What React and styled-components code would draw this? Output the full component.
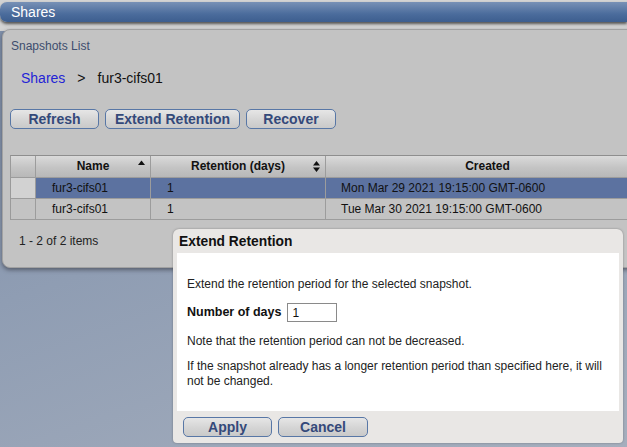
import React from "react";
import styled, { createGlobalStyle } from "styled-components";

const Global = createGlobalStyle`
  html, body { margin: 0; padding: 0; overflow: hidden; }
  body { font-family: "Liberation Sans", Arial, sans-serif; }
`;

const Page = styled.div`
  position: relative;
  width: 627px;
  height: 447px;
  overflow: hidden;
  background: linear-gradient(160deg, #7d8ea9 0%, #8f9db3 45%, #a5aebd 100%);
  padding-top: 2px;
  box-sizing: border-box;
  &::before {
    content: "";
    position: absolute;
    left: 0; right: 0; top: 0; height: 31px;
    background: #d3d3d3;
    z-index: 0;
  }
`;

const TitleBar = styled.div`
  position: relative;
  z-index: 2;
  height: 20px;
  line-height: 20px;
  padding-left: 11px;
  color: #fff;
  font-size: 14px;
  border-radius: 7px 0 0 7px;
  background: linear-gradient(#7891b6, #4b6c9c 60%, #3d5e8f);
  box-shadow: 0 2px 3px rgba(40, 40, 40, 0.75);
`;

const Panel = styled.div`
  position: relative;
  z-index: 1;
  margin: 7px 0 0 2px;
  width: 680px;
  height: 237px;
  background: #c3c3c3;
  border: 1px solid #a2a2a2;
  border-radius: 8px 0 0 8px;
  box-shadow: 0 2px 4px rgba(40, 40, 50, 0.55);
  padding-left: 7px;
  box-sizing: content-box;
  display: flex;
  flex-direction: column;
  align-items: flex-start;
`;

const PanelTitle = styled.div`
  margin: 9px 0 0 1px;
  font-size: 12px;
  line-height: 14px;
  color: #3d4d6e;
`;

const Crumbs = styled.div`
  margin: 17px 0 0 11px;
  font-size: 14px;
  line-height: 16px;
  color: #111;
  display: flex;
`;

const CrumbLink = styled.span`
  color: #2323d6;
`;

const Sep = styled.span`
  margin: 0 12px;
`;

const Toolbar = styled.div`
  margin-top: 23px;
  display: flex;
  gap: 6px;
`;

const Button = styled.button`
  width: ${(p) => p.$w}px;
  height: 20px;
  padding: 0;
  border: 1px solid #5877a6;
  border-radius: 5px;
  background: linear-gradient(#e6e6e6, #d6d6d6 50%, #c9c9c9);
  color: #34497a;
  font-family: "Liberation Sans", Arial, sans-serif;
  font-weight: bold;
  font-size: 14px;
  line-height: 18px;
  box-sizing: border-box;
  cursor: pointer;
`;

const Table = styled.div`
  margin-top: 26px;
  display: grid;
  grid-template-columns: 25px 115px 175px 324px;
  border-top: 1px solid #8e8e8e;
  border-left: 1px solid #9a9a9a;
  font-size: 12px;
  color: #111;
`;

const HeadCell = styled.div`
  position: relative;
  height: 22px;
  line-height: 21px;
  text-align: center;
  font-weight: bold;
  background: linear-gradient(#dadada, #c4c4c4 55%, #b8b8b8);
  border-right: 1px solid #9c9c9c;
  border-bottom: 1px solid #9c9c9c;
  box-sizing: border-box;
`;

const Cell = styled.div`
  height: 21px;
  line-height: 20px;
  padding-left: ${(p) => p.$pad || 16}px;
  background: ${(p) => (p.$sel ? "#5c72a0" : "#c3c3c3")};
  border-right: 1px solid #9c9c9c;
  border-bottom: 1px solid #9c9c9c;
  box-sizing: border-box;
  white-space: nowrap;
`;

const Gutter = styled(Cell)`
  background: ${(p) => (p.$sel ? "#d2d2d2" : "#c3c3c3")};
`;

const SortIcon = styled.svg`
  position: absolute;
  right: 5px;
  top: ${(p) => p.$top}px;
`;

const Pager = styled.div`
  margin: 14px 0 0 9px;
  font-size: 12px;
  line-height: 14px;
  color: #222;
`;

const Dialog = styled.div`
  position: absolute;
  z-index: 5;
  left: 173px;
  top: 229px;
  width: 450px;
  height: 214px;
  background: #e9e7e5;
  border-radius: 6px 6px 4px 4px;
  box-shadow: 0 0 2px rgba(60, 60, 60, 0.5);
  display: flex;
  flex-direction: column;
`;

const DialogTitle = styled.div`
  height: 24px;
  line-height: 25px;
  padding-left: 6px;
  font-size: 13.8px;
  font-weight: bold;
  color: #111;
`;

const DialogBody = styled.div`
  margin: 0 4px;
  height: 158px;
  background: #fff;
  padding: 24px 0 0 10px;
  box-sizing: border-box;
  font-size: 12px;
  line-height: 15px;
  color: #222;
`;

const Para = styled.p`
  margin: 0 0 ${(p) => p.$mb ?? 10}px 0;
  padding-right: 10px;
`;

const FieldRow = styled.div`
  display: flex;
  align-items: center;
  margin: 11px 0 12px 0;
  gap: 6px;
`;

const Label = styled.span`
  font-weight: bold;
  font-size: 12.5px;
  color: #111;
`;

const Input = styled.input`
  width: 50px;
  height: 19px;
  box-sizing: border-box;
  border: 1px solid #8a8a8a;
  padding: 0 4px;
  font-family: "Liberation Sans", Arial, sans-serif;
  font-size: 12px;
  color: #111;
  outline: none;
`;

const DialogFooter = styled.div`
  display: flex;
  gap: 6px;
  padding: 6px 0 0 10px;
`;

const UpArrow = () => (
  <SortIcon $top={4} width="7" height="5" viewBox="0 0 7 5">
    <path d="M0 5 L3.5 0.5 L7 5 Z" fill="#111" />
  </SortIcon>
);

const BothArrow = () => (
  <SortIcon $top={5} width="7" height="11" viewBox="0 0 7 11">
    <path d="M0 4.5 L3.5 0 L7 4.5 Z M0 6.5 L3.5 11 L7 6.5 Z" fill="#111" />
  </SortIcon>
);

const rows = [
  { name: "fur3-cifs01", ret: "1", created: "Mon Mar 29 2021 19:15:00 GMT-0600", sel: true },
  { name: "fur3-cifs01", ret: "1", created: "Tue Mar 30 2021 19:15:00 GMT-0600", sel: false },
];

export default function App() {
  return (
    <>
      <Global />
      <Page>
        <TitleBar>Shares</TitleBar>
        <Panel>
          <PanelTitle>Snapshots List</PanelTitle>
          <Crumbs>
            <CrumbLink>Shares</CrumbLink>
            <Sep>&gt;</Sep>
            <span>fur3-cifs01</span>
          </Crumbs>
          <Toolbar>
            <Button $w={89}>Refresh</Button>
            <Button $w={135}>Extend Retention</Button>
            <Button $w={90}>Recover</Button>
          </Toolbar>
          <Table>
            <HeadCell />
            <HeadCell>
              Name
              <UpArrow />
            </HeadCell>
            <HeadCell>
              Retention (days)
              <BothArrow />
            </HeadCell>
            <HeadCell>Created</HeadCell>
            {rows.map((r, i) => (
              <React.Fragment key={i}>
                <Gutter $sel={r.sel} />
                <Cell $sel={r.sel}>{r.name}</Cell>
                <Cell $sel={r.sel}>{r.ret}</Cell>
                <Cell $sel={r.sel} $pad={15}>{r.created}</Cell>
              </React.Fragment>
            ))}
          </Table>
          <Pager>1 - 2 of 2 items</Pager>
        </Panel>
        <Dialog>
          <DialogTitle>Extend Retention</DialogTitle>
          <DialogBody>
            <Para $mb={0}>Extend the retention period for the selected snapshot.</Para>
            <FieldRow>
              <Label>Number of days</Label>
              <Input defaultValue="1" />
            </FieldRow>
            <Para>Note that the retention period can not be decreased.</Para>
            <Para>
              If the snapshot already has a longer retention period than specified here, it will not be changed.
            </Para>
          </DialogBody>
          <DialogFooter>
            <Button $w={89}>Apply</Button>
            <Button $w={90}>Cancel</Button>
          </DialogFooter>
        </Dialog>
      </Page>
    </>
  );
}
